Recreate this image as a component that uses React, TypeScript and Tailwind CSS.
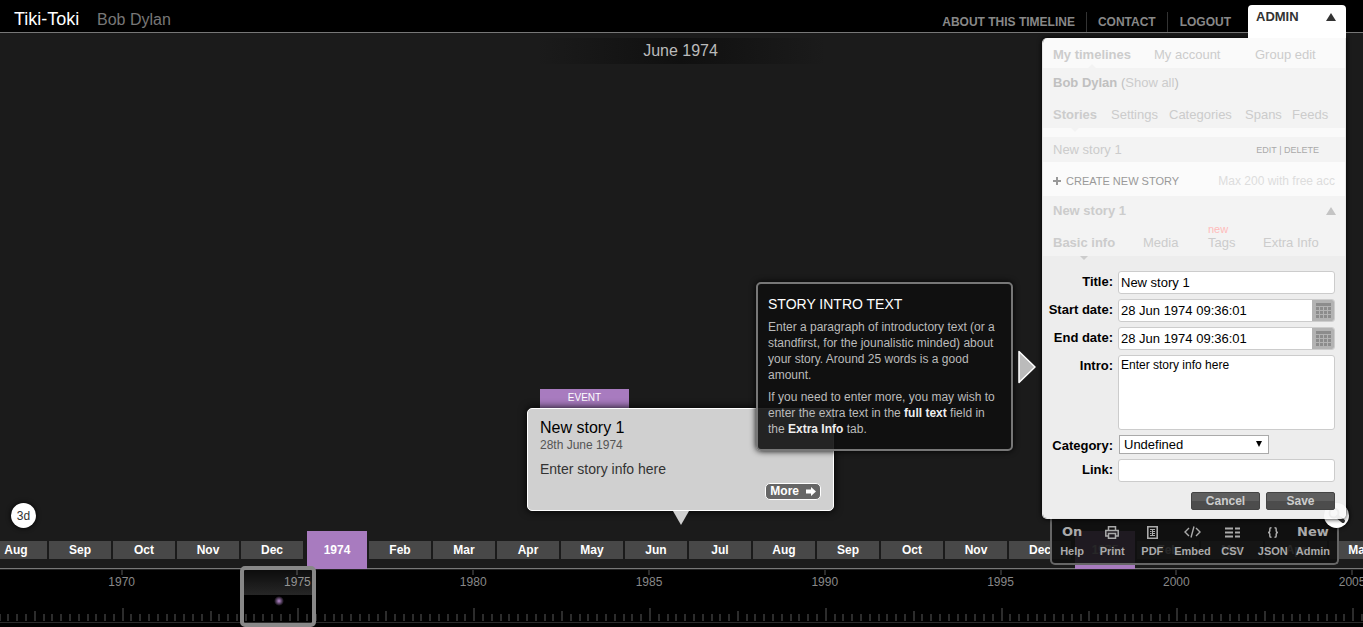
import { useState } from 'react';
import type { ReactNode } from 'react';
import clsx from 'clsx';

type Slot = { label: string; isYear?: boolean };

const slots: Slot[] = [
  { label: 'Aug' },
  { label: 'Sep' },
  { label: 'Oct' },
  { label: 'Nov' },
  { label: 'Dec' },
  { label: '1974', isYear: true },
  { label: 'Feb' },
  { label: 'Mar' },
  { label: 'Apr' },
  { label: 'May' },
  { label: 'Jun' },
  { label: 'Jul' },
  { label: 'Aug' },
  { label: 'Sep' },
  { label: 'Oct' },
  { label: 'Nov' },
  { label: 'Dec' },
  { label: '1975', isYear: true },
  { label: 'Feb' },
  { label: 'Mar' },
  { label: 'Apr' },
  { label: 'May' },
];

const rulerYears = [1965, 1970, 1975, 1980, 1985, 1990, 1995, 2000, 2005];
const ticks = Array.from({ length: 20 }, (_, i) => i);

export default function App() {
  return (
    <div className="relative flex min-h-screen flex-col overflow-hidden bg-[#1b1b1b] font-['Liberation_Sans',Arial,sans-serif]">
      <Header />
      <main className="flex flex-1 flex-col items-center pt-[5px] pr-[2px] pb-[6px]">
        <h1 className="w-[290px] bg-linear-to-r from-transparent via-[#101010] to-transparent text-center text-base leading-[26px] text-[#bbb]">
          June 1974
        </h1>
        <StoryCard />
      </main>
      <MonthBand />
      <Ruler />
      <button className="absolute bottom-[99px] left-[11px] size-[25px] rounded-full bg-white text-xs text-[#333] shadow-[0_0_5px_#000]">
        3d
      </button>
      <ExportBar />
      <button
        aria-label="Search"
        className="absolute right-[14px] bottom-[99px] flex size-[25px] items-center justify-center rounded-full bg-white shadow-[0_0_4px_#000]"
      >
        <svg viewBox="0 0 25 25" className="size-full" fill="none" stroke="#333">
          <circle cx="10" cy="10" r="4.5" strokeWidth="2" />
          <path d="M13.5 13.500l5.500 4.500" strokeWidth="4" strokeLinecap="round" />
        </svg>
      </button>
      <HelpTip />
      <AdminPanel />
    </div>
  );
}

function Header() {
  return (
    <header className="flex h-[33px] shrink-0 items-end justify-between border-b border-[#777] bg-black pl-[14px]">
      <div className="flex items-baseline gap-[14px] pb-px">
        <a href="#" className="w-[69px] text-lg leading-[22px] text-white">
          Tiki-Toki
        </a>
        <span className="text-base leading-[22px] text-[#777]">Bob Dylan</span>
      </div>
      <nav className="mr-[120px] flex text-xs leading-[20px] font-bold text-[#888]">
        <a href="#" className="px-[11px]">ABOUT THIS TIMELINE</a>
        <a href="#" className="border-l border-[#333] px-[11px]">CONTACT</a>
        <a href="#" className="border-l border-[#333] px-[12px]">LOGOUT</a>
      </nav>
    </header>
  );
}

function StoryCard() {
  return (
    <article className="mt-auto flex w-[307px] flex-col items-center">
      <span className="ml-[13px] w-[89px] self-start bg-[#a87bbf] pb-[1px] text-center text-[10px] leading-[18px] text-white">
        EVENT
      </span>
      <div className="flex h-[103px] w-full flex-col rounded-[5px] border border-white bg-[#d0d0d0] px-3 pt-[10px] pb-[10px] shadow-[0_0_8px_#000]">
        <h2 className="text-base leading-[18px] text-black">New story 1</h2>
        <time className="text-xs leading-[16px] text-[#555]">28th June 1974</time>
        <p className="mt-[7px] text-sm leading-[18px] text-[#333]">Enter story info here</p>
        <button className="mt-auto flex h-[17px] items-center gap-[7px] self-end rounded-[5px] border border-white bg-[#666] px-[4px] text-xs leading-[15px] font-bold text-white">
          More
          <svg viewBox="0 0 10 9" className="h-[9px] w-[10px]" fill="currentColor">
            <path d="M0 2.6h5V0l5 4.5L5 9V6.4H0z" />
          </svg>
        </button>
      </div>
      <svg viewBox="0 0 16 14" className="h-[14px] w-[16px]">
        <path d="M0 0h16L8 14z" fill="#d0d0d0" />
      </svg>
    </article>
  );
}

function MonthBand() {
  return (
    <div className="-ml-[15px] flex h-[38px] shrink-0 items-start border-b border-[#777]">
      {slots.map((slot, i) => (
        <div
          key={i}
          className={clsx(
            'shrink-0 text-center text-xs font-bold text-white',
            slot.isYear
              ? 'mr-[2px] ml-[2px] w-[60px] bg-[#a87bbf] pt-[1px] leading-[37px]'
              : 'mt-[10px] mr-[2px] w-[62px] bg-[#484848] leading-[18px]',
          )}
        >
          {slot.label}
        </div>
      ))}
    </div>
  );
}

function Ruler() {
  return (
    <div className="relative shrink-0 overflow-hidden bg-black pb-[4px]">
      <div className="-ml-[142px] grid w-[1582px] grid-cols-9 border-t border-b border-t-[#222] border-b-[#2a2a2a] pb-[1px]">
        {rulerYears.map((year) => (
          <div key={year} className="flex flex-col items-center">
            <span className="h-[5px] w-[2px] bg-[#2c2c2c]" />
            <span className="text-xs leading-[14px] text-[#888]">{year}</span>
            <div className="mt-[19px] grid h-[13px] w-full grid-cols-20 items-end">
              {ticks.map((i) => (
                <span
                  key={i}
                  className={clsx(
                    'w-[2px] bg-[#2c2c2c]',
                    i === 10 ? 'h-[13px]' : i === 0 ? 'h-[10px]' : 'h-[7px]',
                  )}
                />
              ))}
            </div>
          </div>
        ))}
      </div>
      <span className="absolute top-[27px] left-[274px] size-[10px] rounded-full bg-radial from-[#b98bd0] to-transparent to-70%" />
      <ViewWindow />
    </div>
  );
}

// The frame sticks out above the ruler, so it is fixed to the page edge instead of being clipped.
function ViewWindow() {
  return (
    <div className="fixed bottom-0 left-[240px] h-[61px] w-[76px] rounded-[5px] border-4 border-[#888]">
      <div className="h-[25px] bg-linear-to-b from-white/5 to-white/15" />
    </div>
  );
}

function HelpTip() {
  return (
    <aside className="absolute top-[282px] right-[327px] flex items-center gap-[5px]">
      <div className="-ml-[23px] w-[257px] rounded-[5px] border-2 border-[#777] bg-[#101010]/90 px-[10px] pt-[11px] pb-[12px] text-xs leading-[16px] text-[#bbb] shadow-[0_0_6px_#000]">
        <h3 className="text-sm leading-[18px] text-white">STORY INTRO TEXT</h3>
        <p className="mt-[6px]">
          Enter a paragraph of introductory text (or a standfirst, for the jounalistic minded) about
          your story. Around 25 words is a good amount.
        </p>
        <p className="mt-[6px]">
          If you need to enter more, you may wish to enter the extra text in the{' '}
          <b className="text-[#eee]">full text</b> field in the <b className="text-[#eee]">Extra Info</b> tab.
        </p>
      </div>
      <svg viewBox="0 0 18 34" className="h-[34px] w-[18px]">
        <path d="M1 1.5v31L17 17z" fill="#bbb" stroke="#fff" strokeWidth="1.5" strokeLinejoin="round" />
      </svg>
    </aside>
  );
}

function AdminPanel() {
  const [title, setTitle] = useState('New story 1');
  const [intro, setIntro] = useState('Enter story info here');

  return (
    <section className="absolute top-[5px] right-[17px] flex w-[304px] flex-col items-end text-[13px] leading-[16px] text-[#ccc]">
      <button className="z-10 flex h-[33px] w-[98px] items-start justify-between rounded-t-[4px] bg-white px-[8px] pt-[4px] font-bold text-[#333]">
        ADMIN
        <UpMark className="mt-[4px] mr-[2px] text-[#333]" />
      </button>
      <div className="w-full overflow-hidden rounded-b-[5px] rounded-tl-[5px] border-x border-b border-white/90 shadow-[0_0_5px_#000]">
        <nav className="relative grid h-[30px] grid-cols-[101px_101px_1fr] items-center bg-[#fafafa] pt-[3px] pl-[10px]">
          <a href="#" className="font-bold">My timelines</a>
          <a href="#">My account</a>
          <a href="#">Group edit</a>
          <Notch className="top-[26px] left-[45px] rotate-180 text-[#f3f3f3]" />
        </nav>
        <div className="relative h-[60px] bg-[#f3f3f3] pt-[7px] pl-[10px]">
          <p className="text-[#c0c0c0]">
            <b>Bob Dylan</b> (<a href="#" className="text-[#ccc]">Show all</a>)
          </p>
          <nav className="mt-[16px] grid grid-cols-[58px_58px_76px_47px_1fr]">
            <a href="#" className="font-bold">Stories</a>
            <a href="#">Settings</a>
            <a href="#">Categories</a>
            <a href="#">Spans</a>
            <a href="#">Feeds</a>
          </nav>
        </div>
        <div className="relative h-[9px] bg-[#fafafa]">
          <Notch className="top-0 left-[28px] text-[#f3f3f3]" />
        </div>
        <div className="flex h-[25px] items-center justify-between bg-[#f3f3f3] pr-[26px] pl-[10px]">
          <span>New story 1</span>
          <span className="text-[9px] text-[#aaa]">
            <a href="#">EDIT</a> | <a href="#">DELETE</a>
          </span>
        </div>
        <div className="flex h-[34px] items-center justify-between bg-[#fbfbfb] pt-[4px] pr-[10px] pl-[10px]">
          <button className="flex items-center gap-[5px] text-[11px] text-[#999]">
            <svg viewBox="0 0 8 8" className="size-[8px]" stroke="currentColor" strokeWidth="2">
              <path d="M4 0v8M0 4h8" />
            </svg>
            CREATE NEW STORY
          </button>
          <span className="text-xs text-[#ddd]">Max 200 with free acc</span>
        </div>
        <div className="h-[60px] bg-[#f3f3f3] pt-[7px] pl-[10px]">
          <div className="flex items-center justify-between pr-[9px] font-bold">
            New story 1
            <UpMark className="text-[#c4c4c4]" />
          </div>
          <nav className="mt-[4px] grid grid-cols-[90px_65px_55px_1fr] items-end">
            <a href="#" className="font-bold">Basic info</a>
            <a href="#">Media</a>
            <a href="#">
              <span className="block text-[11px] leading-[12px] text-[#fbb]">new</span>
              Tags
            </a>
            <a href="#">Extra Info</a>
          </nav>
        </div>
        <form className="relative bg-[#f9f9f9]/95 pt-[15px] pr-[10px] pb-[8px] text-black">
          <Notch className="top-0 left-[37px] text-[#ccc]" />
          <div className="grid grid-cols-[70px_1fr] gap-[5px]">
            <FieldLabel htmlFor="title">Title:</FieldLabel>
            <input
              id="title"
              value={title}
              onChange={(e) => setTitle(e.target.value)}
              className="h-[23px] w-full rounded-[3px] border border-[#ccc] bg-white px-[2px]"
            />
            <FieldLabel htmlFor="start">Start date:</FieldLabel>
            <DateField id="start" />
            <FieldLabel htmlFor="end">End date:</FieldLabel>
            <DateField id="end" />
            <FieldLabel htmlFor="intro">Intro:</FieldLabel>
            <textarea
              id="intro"
              value={intro}
              onChange={(e) => setIntro(e.target.value)}
              className="block h-[75px] w-full resize-none rounded-[3px] border border-[#ccc] bg-white px-[2px] py-[1px] text-xs leading-[16px]"
            />
            <FieldLabel htmlFor="category">Category:</FieldLabel>
            <div className="relative ml-[1px] w-[150px]">
              <select
                id="category"
                className="block h-[19px] w-full appearance-none border border-[#aaa] bg-white px-[4px] leading-[17px]"
              >
                <option>Undefined</option>
              </select>
              <svg viewBox="0 0 6 6" className="pointer-events-none absolute top-[6px] right-[7px] size-[6px]">
                <path d="M0 0h6L3 6z" />
              </svg>
            </div>
            <FieldLabel htmlFor="link">Link:</FieldLabel>
            <input id="link" className="h-[23px] w-full rounded-[3px] border border-[#ccc] bg-white px-[2px]" />
          </div>
          <div className="mt-[10px] flex justify-end gap-[6px]">
            <FormButton>Cancel</FormButton>
            <FormButton>Save</FormButton>
          </div>
        </form>
      </div>
    </section>
  );
}

function FieldLabel({ htmlFor, children }: { htmlFor: string; children: ReactNode }) {
  return (
    <label htmlFor={htmlFor} className="h-[19px] pt-[3px] text-right font-bold">
      {children}
    </label>
  );
}

function DateField({ id }: { id: string }) {
  const [value, setValue] = useState('28 Jun 1974 09:36:01');
  return (
    <div className="flex h-[23px] overflow-hidden rounded-[3px] border border-[#ccc] bg-white">
      <input
        id={id}
        value={value}
        onChange={(e) => setValue(e.target.value)}
        className="min-w-0 flex-1 px-[2px]"
      />
      <button type="button" aria-label="Pick a date" className="flex w-[22px] items-center justify-center bg-[#b3b3b3]">
        <svg viewBox="0 0 15 15" className="size-[15px]" fill="#8c8c8c">
          <path d="M0 0h15v3H0z" />
          {[4, 8, 12].map((y) =>
            [0, 4, 8, 12].map((x) => <rect key={`${x}-${y}`} x={x} y={y} width="3" height="3" />),
          )}
        </svg>
      </button>
    </div>
  );
}

function FormButton({ children }: { children: ReactNode }) {
  return (
    <button
      type="button"
      className="h-[18px] w-[69px] rounded-[2px] border border-[#444] bg-linear-to-b from-[#5e5e5e] from-50% to-[#4c4c4c] to-50% text-xs leading-[16px] font-bold text-[#ccc]"
    >
      {children}
    </button>
  );
}

function UpMark({ className }: { className: string }) {
  return (
    <svg viewBox="0 0 10 8" className={clsx('h-[8px] w-[10px]', className)} fill="currentColor">
      <path d="M5 0l5 8H0z" />
    </svg>
  );
}

function Notch({ className }: { className: string }) {
  return (
    <svg viewBox="0 0 8 4" className={clsx('absolute h-[4px] w-[8px]', className)} fill="currentColor">
      <path d="M0 0h8L4 4z" />
    </svg>
  );
}

const bigWord = "font-['DejaVu_Sans',Verdana,sans-serif] text-[13px] leading-[14px]";

const exportItems: { label: string; icon: ReactNode }[] = [
  { label: 'Help', icon: <span className={bigWord}>On</span> },
  {
    label: 'Print',
    icon: (
      <svg viewBox="0 0 14 13" className="h-[13px] w-[14px]" fill="none" stroke="currentColor" strokeWidth="1.5">
        <path d="M3.5 4V.8h7V4" />
        <path d="M3.5 10H.8V4.5h12.4V10h-2.7" />
        <path d="M3.5 7.5h7v4.7h-7z" />
      </svg>
    ),
  },
  {
    label: 'PDF',
    icon: (
      <svg viewBox="0 0 11 13" className="h-[13px] w-[11px]" fill="none" stroke="currentColor">
        <path d="M.8.8h9.4v11.4H.8z" strokeWidth="1.6" />
        <path d="M3 3.5h5M3 5.5h1.5M6 5.5h2M3 7.5h1.5M6 7.5h2M3 9.5h5" />
        <path d="M5.5 4v5" />
      </svg>
    ),
  },
  {
    label: 'Embed',
    icon: (
      <svg viewBox="0 0 17 12" className="h-[12px] w-[17px]" fill="none" stroke="currentColor" strokeWidth="1.4">
        <path d="M5 2L1 6l4 4M12 2l4 4-4 4M10 .5L7 11.5" />
      </svg>
    ),
  },
  {
    label: 'CSV',
    icon: (
      <svg viewBox="0 0 15 11" className="h-[11px] w-[15px]" fill="none" stroke="currentColor" strokeWidth="2">
        <path d="M0 1.500h8M10 1.500h5M0 5.500h8M10 5.500h5M0 9.500h8M10 9.500h5" />
      </svg>
    ),
  },
  {
    label: 'JSON',
    icon: (
      <svg viewBox="0 0 12 11" className="h-[11px] w-[12px]" fill="none" stroke="currentColor" strokeWidth="1.5">
        <path d="M4.500 .8H4Q2.800 .8 2.800 2v2Q2.800 5.500 1 5.500Q2.800 5.500 2.800 7v2Q2.800 10.200 4 10.200h.5" />
        <path d="M7.500 .8H8Q9.200 .8 9.200 2v2Q9.200 5.500 11 5.500Q9.200 5.500 9.200 7v2Q9.200 10.200 8 10.200h-.5" />
      </svg>
    ),
  },
  { label: 'Admin', icon: <span className={bigWord}>New</span> },
];

function ExportBar() {
  return (
    <div className="absolute right-[24px] bottom-[62px] grid h-[48px] w-[289px] grid-cols-7 items-end rounded-b-[5px] border-x-2 border-b-2 border-[#666] bg-[#101010]/90 pr-[4px] pb-[5px] text-[11px] leading-[14px] font-bold text-[#aaa]">
      {exportItems.map(({ label, icon }) => (
        <button key={label} className="flex flex-col items-center">
          <span className="mb-[5px] flex h-[14px] items-center">{icon}</span>
          {label}
        </button>
      ))}
    </div>
  );
}
